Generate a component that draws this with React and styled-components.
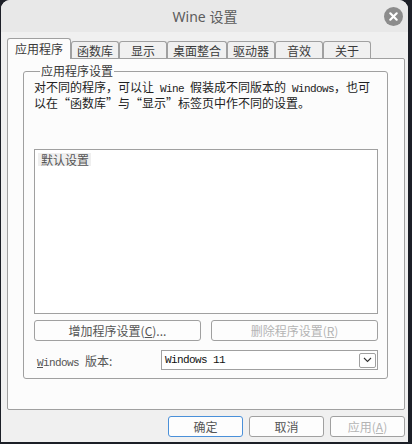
import React from 'react'
import styled, { createGlobalStyle } from 'styled-components';

const GlobalStyle = createGlobalStyle`
  html, body {
    margin: 0;
    padding: 0;
    background: #1c1f27;
    width: 412px;
    height: 444px;
    overflow: hidden;
  }
  * { box-sizing: border-box; }
`;

const cjk = `"Noto Sans CJK SC", "Noto Sans", sans-serif`;
const line = '#a0a0a0';

const Window = styled.div`
  margin-left: 1px;
  width: 407px;
  height: 442px;
  background: #f0f0f0;
  border-radius: 9px 9px 0 0;
  overflow: hidden;
  display: flex;
  flex-direction: column;
  font-family: ${cjk};
  font-size: 12px;
  color: #222;
`;

const TitleBar = styled.div`
  height: 32px;
  background: #e8e8e8;
  display: grid;
  grid-template-columns: 1fr auto 1fr;
  align-items: center;
`;

const Title = styled.div`
  grid-column: 2;
  font-family: "Noto Sans", "Noto Sans CJK SC", sans-serif;
  font-size: 14px;
  color: #5c5c5c;
  padding-left: 1px;
`;

const CloseButton = styled.div`
  justify-self: end;
  margin-right: 5px;
  width: 19px;
  height: 19px;
  display: flex;
  svg { display: block; }
`;

const Body = styled.div`
  flex: 1;
  padding: 6px 3px 0 6px;
  display: flex;
  flex-direction: column;
`;

const TabBar = styled.div`
  display: flex;
  align-items: flex-end;
  height: 20px;
  position: relative;
  z-index: 1;
`;

const Tab = styled.div`
  min-width: 48px;
  padding: 0 ${p => (p.$active ? '7px' : '5px')};
  height: ${p => (p.$active ? '21px' : '17px')};
  margin-bottom: ${p => (p.$active ? '-1px' : '0')};
  border: 1px solid ${line};
  border-bottom: none;
  border-radius: 3px 3px 0 0;
  background: ${p => (p.$active ? '#fcfcfc' : '#f0f0f0')};
  display: flex;
  align-items: center;
  justify-content: center;
  padding-bottom: ${p => (p.$active ? '2px' : '0')};
  color: #3a3a3a;
  white-space: nowrap;
`;

const Panel = styled.div`
  height: 352px;
  background: #fcfcfc;
  border: 1px solid ${line};
  border-radius: 0 2px 2px 2px;
  padding: 5px 16px 0 15px;
`;

const Group = styled.fieldset`
  margin: 0;
  border: 1px solid ${line};
  border-radius: 3px;
  padding: 2px 9px 8px 10px;
  min-width: 0;
`;

const Legend = styled.legend`
  padding: 0 1px;
  margin-left: 6px;
  line-height: 14px;
  color: #3a3a3a;
`;

const Description = styled.p`
  margin: 0;
  line-height: 13px;
  color: #222;
  white-space: nowrap;
`;

const Mono = styled.span`
  font-family: "Liberation Mono", monospace;
  font-size: 11px;
  letter-spacing: -0.6px;
`;

const ListBox = styled.div`
  margin-top: 40px;
  height: 165px;
  background: #fff;
  border: 1px solid ${line};
  padding: 1px 3px;
`;

const ListItem = styled.div`
  display: inline-block;
  background: #efefef;
  color: #555;
  line-height: 13px;
  padding: 0 2px 0 3px;
`;

const ButtonRow = styled.div`
  margin-top: 6px;
  display: grid;
  grid-template-columns: 1fr 1fr;
  gap: 10px;
`;

const Button = styled.div`
  height: 21px;
  width: ${p => p.$width || 'auto'};
  border: 1px solid ${p => (p.$default ? '#4a90d9' : line)};
  border-radius: 3px;
  background: #fdfdfd;
  display: flex;
  align-items: center;
  justify-content: center;
  color: ${p => (p.$disabled ? '#b4b4b4' : '#555')};
  white-space: nowrap;
  u { text-underline-offset: 1px; }
`;

const VersionRow = styled.div`
  margin-top: 9px;
  display: grid;
  grid-template-columns: 127px 1fr;
  align-items: center;
`;

const Label = styled.div`
  padding-left: 3px;
  color: #555;
  u { text-underline-offset: 1px; }
`;

const Combo = styled.div`
  height: 20px;
  border: 1px solid ${line};
  background: #fff;
  display: flex;
  align-items: center;
  justify-content: space-between;
  padding: 0 1px 0 3px;
  color: #111;
`;

const DropButton = styled.div`
  width: 17px;
  height: 15px;
  border: 1px solid ${line};
  border-radius: 2px;
  display: flex;
  align-items: center;
  justify-content: center;
  svg { display: block; }
`;

const Footer = styled.div`
  margin-top: 6px;
  display: flex;
  justify-content: flex-end;
  gap: 6px;
`;

const tabs = ['应用程序', '函数库', '显示', '桌面整合', '驱动器', '音效', '关于'];

const App = () => {
  return (
    <>
      <GlobalStyle />
      <Window>
        <TitleBar>
          <Title>Wine 设置</Title>
          <CloseButton>
            <svg width="19" height="19" viewBox="0 0 19 19">
              <circle cx="9.5" cy="9.5" r="9.5" fill="#8c8c8c" />
              <path d="M6.3 6.3 L12.7 12.7 M12.7 6.3 L6.3 12.7" stroke="#fff" strokeWidth="2.2" strokeLinecap="round" />
            </svg>
          </CloseButton>
        </TitleBar>
        <Body>
          <TabBar>
            {tabs.map((t, i) => (
              <Tab key={t} $active={i === 0}>{t}</Tab>
            ))}
          </TabBar>
          <Panel>
            <Group>
              <Legend>应用程序设置</Legend>
              <Description>
                对不同的程序，可以让<Mono> Wine </Mono>假装成不同版本的<Mono> Windows</Mono>，也可
                <br />
                以在“函数库”与“显示”标签页中作不同的设置。
              </Description>
              <ListBox>
                <ListItem>默认设置</ListItem>
              </ListBox>
              <ButtonRow>
                <Button>增加程序设置(<u>C</u>)...</Button>
                <Button $disabled>删除程序设置(<u>R</u>)</Button>
              </ButtonRow>
              <VersionRow>
                <Label><Mono><u>W</u>indows </Mono>版本:</Label>
                <Combo>
                  <Mono>Windows 11</Mono>
                  <DropButton>
                    <svg width="9" height="6" viewBox="0 0 9 6">
                      <path d="M1 1 L4.5 4.5 L8 1" fill="none" stroke="#333" strokeWidth="1.1" />
                    </svg>
                  </DropButton>
                </Combo>
              </VersionRow>
            </Group>
          </Panel>
          <Footer>
            <Button $width="75px" $default>确定</Button>
            <Button $width="75px">取消</Button>
            <Button $width="75px" $disabled>应用(<u>A</u>)</Button>
          </Footer>
        </Body>
      </Window>
    </>
  )
}

export default App
